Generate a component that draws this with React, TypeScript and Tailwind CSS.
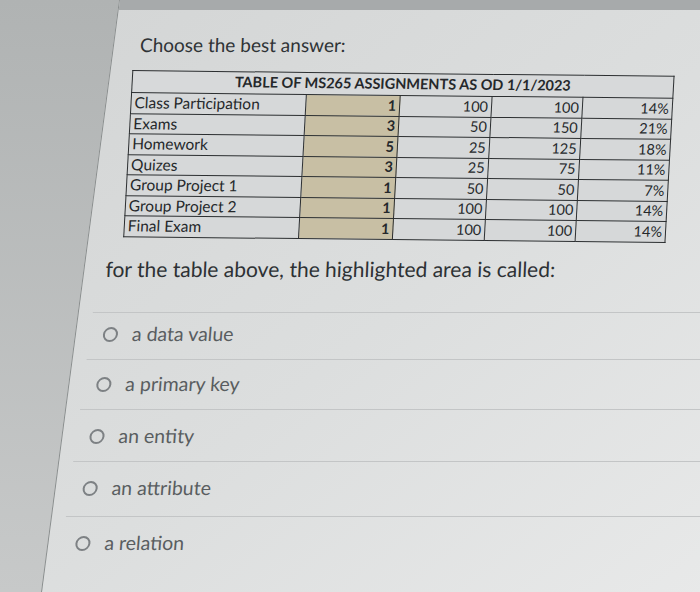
import React from "react";

const rows = [
  ["Class Participation", "1", "100", "100", "14%"],
  ["Exams", "3", "50", "150", "21%"],
  ["Homework", "5", "25", "125", "18%"],
  ["Quizes", "3", "25", "75", "11%"],
  ["Group Project 1", "1", "50", "50", "7%"],
  ["Group Project 2", "1", "100", "100", "14%"],
  ["Final Exam", "1", "100", "100", "14%"],
];

const options = [
  { label: "a data value", row: "h-[47px] pt-[9px]" },
  { label: "a primary key", row: "h-[50px] pt-[12px]" },
  { label: "an entity", row: "h-[52px] pt-[14px]" },
  { label: "an attribute", row: "h-[55px] pt-[14px]" },
  { label: "a relation", row: "h-[70px] pt-[14px]" },
];

const cell = "border-[1.5px] border-[#2c2f31] px-[3px] leading-none";

const App: React.FC = () => {
  return (
    <div className="w-[700px] h-[592px] overflow-hidden bg-[#d9dbdb]">
      {/* photo is taken at an angle, so the whole screen leans */}
      <div
        className="w-[800px] h-[592px] -ml-[50px] skew-x-[-7.5deg] flex"
        style={{ fontFamily: "Lato, 'Open Sans', sans-serif" }}
      >
        <div className="w-[130px] shrink-0 bg-gradient-to-b from-[#b0b3b3] to-[#c7c9c9]" />

        <div className="flex-1 flex flex-col border-l border-[#8a8e8e] bg-gradient-to-br from-[#d4d6d6] via-[#dcdede] to-[#e8e9e9]">
          <div className="h-[10px] shrink-0 bg-[#a7aaab]" />

          {/* Question */}
          <p className="mt-[22px] pl-[26px] text-[19px] leading-[26px] text-[#2f3336]">
            <span className="inline-block skew-x-[5deg]">Choose the best answer:</span>
          </p>

          <div className="mt-[15px] ml-[28px] w-[542px] rotate-[0.6deg] skew-x-[5deg]">
            <table className="border-collapse text-[14.5px] text-[#25282b] w-full table-fixed">
              <colgroup>
                <col className="w-[175px]" />
                <col className="w-[94px]" />
                <col className="w-[92px]" />
                <col className="w-[91px]" />
                <col className="w-[90px]" />
              </colgroup>
              <thead>
                <tr className="h-[22px] bg-[#d7d9da]">
                  <th colSpan={5} className={`${cell} font-bold text-[14.5px] text-center`}>
                    TABLE OF MS265 ASSIGNMENTS AS OD 1/1/2023
                  </th>
                </tr>
              </thead>
              <tbody>
                {rows.map((r, i) => (
                  <tr key={i} className="h-[20.5px] bg-[#d6d8d9]">
                    <td className={`${cell} text-left text-[15.5px] whitespace-nowrap`}>{r[0]}</td>
                    <td className={`${cell} text-right font-bold bg-[#c8bfa4]`}>{r[1]}</td>
                    <td className={`${cell} text-right`}>{r[2]}</td>
                    <td className={`${cell} text-right`}>{r[3]}</td>
                    <td className={`${cell} text-right`}>{r[4]}</td>
                  </tr>
                ))}
              </tbody>
            </table>
          </div>

          <p className="mt-[15px] pl-[21px] text-[21px] leading-[28px] text-[#2d3134]">
            <span className="inline-block skew-x-[5deg]">
              for the table above, the highlighted area is called:
            </span>
          </p>

          {/* Answers */}
          <div className="mt-[29px] ml-[14px] flex flex-col">
            {options.map((o) => (
              <label
                key={o.label}
                className={`${o.row} flex items-start gap-[14px] pl-[13px] border-t border-[#c3c5c6]`}
              >
                <span className="mt-[5px] w-[15px] h-[15px] rounded-full border-2 border-[#7d8184] shrink-0" />
                <span className="inline-block skew-x-[3deg] text-[19.5px] leading-[24px] text-[#595d60]">
                  {o.label}
                </span>
              </label>
            ))}
          </div>
        </div>
      </div>
    </div>
  );
};

export default App;
